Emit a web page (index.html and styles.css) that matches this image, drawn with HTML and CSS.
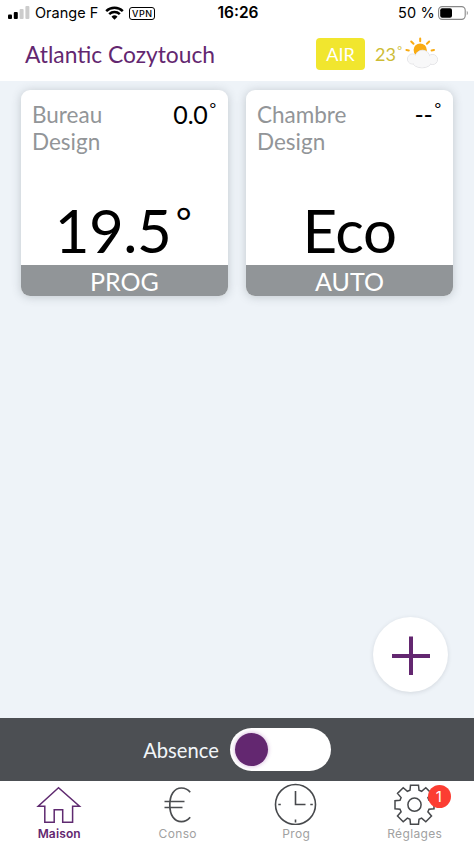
FILE: index.html
```
<!DOCTYPE html>
<html lang="fr">
<head>
    <meta charset="UTF-8">
    <meta name="viewport" content="width=device-width, initial-scale=1.0">
    <title>Atlantic Cozytouch</title>
    <link rel="stylesheet" href="styles.css">
</head>
<body>
    <div class="app">
        <div class="status-bar">
            <div class="status-left">
                <svg class="signal" width="22" height="14" viewBox="0 0 22 14">
                    <rect x="0" y="8.5" width="4" height="4.5" rx="1"/>
                    <rect x="5.8" y="6" width="4" height="7" rx="1"/>
                    <rect x="11.6" y="3" width="4" height="10" rx="1" fill="#ccc"/>
                    <rect x="17.4" y="0" width="4" height="13" rx="1" fill="#ccc"/>
                </svg>
                <span class="carrier">Orange F</span>
                <svg class="wifi" width="19" height="14" viewBox="0 0 19 14">
                    <path d="M1.2 5.1a12 12 0 0 1 16.6 0M4.2 8.2a7.7 7.7 0 0 1 10.6 0" fill="none" stroke="#000" stroke-width="2.5"/>
                    <path d="M9.5 13.7l-3-3a4.3 4.3 0 0 1 6 0z"/>
                </svg>
                <span class="vpn">VPN</span>
            </div>
            <div class="clock">16:26</div>
            <div class="status-right">
                <span>50 %</span>
                <svg width="30" height="14" viewBox="0 0 30 14">
                    <rect x=".6" y=".6" width="26.6" height="12.8" rx="3.6" fill="#fff" stroke="#888" stroke-width="1.1"/>
                    <rect x="2.2" y="2.2" width="11.8" height="9.6" rx="2"/>
                    <path d="M28.8 4.8v4.4q1-.8 1-2.2t-1-2.2z" fill="#888"/>
                </svg>
            </div>
        </div>

        <header>
            <h1>Atlantic Cozytouch</h1>
            <span class="air">AIR</span>
            <span class="outside">23<span class="deg">°</span></span>
            <svg class="weather" width="34" height="34" viewBox="0 0 34 34">
                <g stroke="#f9ab12" stroke-width="2" stroke-linecap="round">
                    <path d="M15.2 3.500v2.700M6.200 6.500l2.300 2.300M24.200 6.500l-2.300 2.300M1.400 15l2.400.4M29 15l-2.400.4"/>
                </g>
                <circle cx="15.200" cy="15" r="6.600" fill="#f9ab12"/>
                <g fill="#f5f5f6" stroke="#e3e3e6" stroke-width="1">
                    <circle cx="7.500" cy="24" r="5"/>
                    <circle cx="27.500" cy="24.500" r="5"/>
                    <circle cx="17.500" cy="22.500" r="7.300"/>
                    <ellipse cx="17" cy="27.500" rx="9" ry="5.300"/>
                </g>
                <g fill="#f8f8f9">
                    <circle cx="7.500" cy="24" r="4.600"/>
                    <circle cx="27.500" cy="24.500" r="4.600"/>
                    <circle cx="17.500" cy="22.500" r="6.900"/>
                    <ellipse cx="17" cy="27.500" rx="8.600" ry="4.900"/>
                </g>
            </svg>
        </header>

        <main>
            <div class="rooms">
                <div class="card">
                    <div class="card-top">
                        <div class="name">Bureau<br>Design</div>
                        <div class="current">0.0<span class="deg">°</span></div>
                    </div>
                    <div class="target">19.5<span class="deg">°</span></div>
                    <div class="mode">PROG</div>
                </div>
                <div class="card">
                    <div class="card-top">
                        <div class="name">Chambre<br>Design</div>
                        <div class="current">--<span class="deg">°</span></div>
                    </div>
                    <div class="target">Eco</div>
                    <div class="mode">AUTO</div>
                </div>
            </div>
            <button class="add" aria-label="Ajouter">
                <svg width="40" height="40" viewBox="0 0 40 40">
                    <path d="M20 1.500v39M1 21h38" stroke="#632770" stroke-width="4"/>
                </svg>
            </button>
        </main>

        <div class="absence">
            <span>Absence</span>
            <div class="switch"><div class="knob"></div></div>
        </div>

        <nav>
            <a class="tab active">
                <svg width="46" height="42" viewBox="0 0 46 42">
                    <path d="M22.500 4.800L2.200 23.200h6.600v16.100h9.400V26.800h8.500v12.500h9.900V23.200h6.900z" fill="none" stroke="#5f2a70" stroke-width="1.500"/>
                </svg>
                <span>Maison</span>
            </a>
            <a class="tab">
                <svg width="46" height="42" viewBox="0 0 46 42">
                    <path d="M35.200 9.200C33 6.400 30 5 26.500 5 19 5 14.800 12 14.800 22S19 38.700 26.500 38.700C30 38.700 33 37 35.200 34.300M9.500 18.500h20M9.500 24.500h18" fill="none" stroke="#4b4d50" stroke-width="1.700"/>
                </svg>
                <span>Conso</span>
            </a>
            <a class="tab">
                <svg width="46" height="42" viewBox="0 0 46 42">
                    <g fill="none" stroke="#47494c" stroke-width="1.600">
                        <circle cx="22.500" cy="21.500" r="20"/>
                        <path d="M22.500 8v13.500h10M22.500 36.500v3M5.300 21.500h2.500M37.300 21.500h2.500"/>
                    </g>
                </svg>
                <span>Prog</span>
            </a>
            <a class="tab">
                <svg width="46" height="42" viewBox="-22.500 -21.700 46 42">
                    <g fill="none" stroke="#47494c" stroke-width="1.500">
                        <path d="M-4-19.500H4L4.500-14.500 7.100-13.400 11.300-17 17-11.300 13.400-7.100 14.500-4.500 19.500-4V4L14.500 4.500 13.400 7.100 17 11.300 11.300 17 7.100 13.400 4.500 14.500 4 19.500H-4L-4.500 14.500-7.100 13.400-11.300 17-17 11.300-13.400 7.100-14.500 4.500-19.500 4V-4L-14.500-4.500-13.400-7.100-17-11.300-11.300-17-7.100-13.400-4.500-14.500z"/>
                        <circle r="6.600"/>
                    </g>
                </svg>
                <span>Réglages</span>
                <b class="badge">1</b>
            </a>
        </nav>
    </div>
</body>
</html>
```

FILE: styles.css
```
* {
    margin: 0;
    padding: 0;
    box-sizing: border-box;
}

body {
    font-family: Lato, sans-serif;
    background-color: #fff;
    color: #000;
}

.app {
    width: 474px;
    height: 843px;
    display: flex;
    flex-direction: column;
    overflow: hidden;
}

/* Status bar */
.status-bar {
    height: 26px;
    padding: 0 6px 0 8px;
    display: grid;
    grid-template-columns: 1fr auto 1fr;
    align-items: center;
    font-family: Inter, sans-serif;
    font-size: 14.5px;
    line-height: 26px;
}

.status-left,
.status-right {
    display: flex;
    align-items: center;
}

.status-right {
    justify-content: flex-end;
    gap: 3px;
    letter-spacing: 0.2px;
}

.carrier {
    margin-left: 5px;
}

.wifi {
    margin-left: 7px;
}

.vpn {
    margin-left: 5px;
    width: 26px;
    height: 13px;
    border: 1px solid #000;
    border-radius: 3px;
    font-size: 9px;
    font-weight: 500;
    line-height: 11px;
    letter-spacing: 0.5px;
    text-align: center;
}

.clock {
    font-size: 15.5px;
    font-weight: 600;
}

/* Header */
header {
    height: 55px;
    padding-left: 25px;
    display: flex;
    align-items: center;
}

h1 {
    width: 291px;
    font-size: 22.8px;
    font-weight: 400;
    color: #632770;
}

.air {
    width: 49px;
    height: 32px;
    border-radius: 4px;
    background-color: #f1e62e;
    color: #fff;
    font-size: 18px;
    line-height: 33px;
    text-align: center;
}

.outside {
    width: 30px;
    margin-left: 10px;
    font-size: 18px;
    color: #cdbc35;
    white-space: nowrap;
}

.deg {
    margin-left: 0.12em;
    font-size: 0.64em;
    line-height: 0;
    vertical-align: 0.5em;
}

.weather {
    margin-bottom: 4px;
}

/* Rooms */
main {
    height: 637px;
    padding: 9px 21px 0;
    background-color: #eef3f8;
    display: flex;
    flex-direction: column;
}

.rooms {
    display: grid;
    grid-template-columns: 207px 207px;
    gap: 18px;
}

.card {
    height: 206px;
    border-radius: 9px;
    background-color: #fff;
    box-shadow: 0 1px 10px rgba(60, 70, 80, 0.25);
    display: flex;
    flex-direction: column;
    overflow: hidden;
}

.card-top {
    height: 100px;
    padding: 11px 12px 0 11px;
    display: flex;
    justify-content: space-between;
}

.name {
    font-size: 22.5px;
    line-height: 27px;
    color: #929598;
}

.current {
    font-size: 25px;
    line-height: 26px;
    letter-spacing: -0.2px;
}

.current .deg {
    vertical-align: 0.6em;
}

.target {
    height: 75px;
    font-size: 60px;
    line-height: 80px;
    letter-spacing: -0.5px;
    text-align: center;
}

.target .deg {
    margin-right: 3px;
    vertical-align: 0.44em;
}

.mode {
    height: 31px;
    background-color: #919598;
    color: #fff;
    font-size: 25px;
    line-height: 32px;
    text-align: center;
}

.add {
    width: 75px;
    height: 75px;
    margin: auto 5px 26px auto;
    border: none;
    border-radius: 50%;
    background-color: #fff;
    box-shadow: 0 1px 4px rgba(60, 70, 80, 0.15);
    display: flex;
    align-items: center;
    justify-content: center;
}

/* Absence switch */
.absence {
    height: 63px;
    background-color: #4c4f53;
    color: #f2f6f9;
    font-size: 20.2px;
    display: flex;
    align-items: center;
    justify-content: center;
    gap: 11px;
}

.switch {
    width: 101px;
    height: 43px;
    padding: 5px;
    border-radius: 22px;
    background-color: #fff;
}

.knob {
    width: 33px;
    height: 33px;
    border-radius: 50%;
    background-color: #632770;
    box-shadow: 0 0 4px rgba(130, 40, 150, 0.4);
}

/* Tabs */
nav {
    height: 62px;
    display: grid;
    grid-template-columns: repeat(4, 118.5px);
}

.tab {
    position: relative;
    padding-top: 2px;
    display: flex;
    flex-direction: column;
    align-items: center;
    font-family: Inter, sans-serif;
    font-size: 12px;
    line-height: 17px;
    letter-spacing: 0.35px;
    color: #a1a1a1;
}

.active {
    color: #632770;
    font-weight: 600;
}

.active span {
    letter-spacing: 0.15px;
}

.badge {
    position: absolute;
    top: 4px;
    left: 72px;
    width: 23px;
    height: 23px;
    border-radius: 50%;
    background-color: #fc3d32;
    color: #fff;
    font-size: 15px;
    font-weight: 400;
    line-height: 23px;
    text-align: center;
}
```
